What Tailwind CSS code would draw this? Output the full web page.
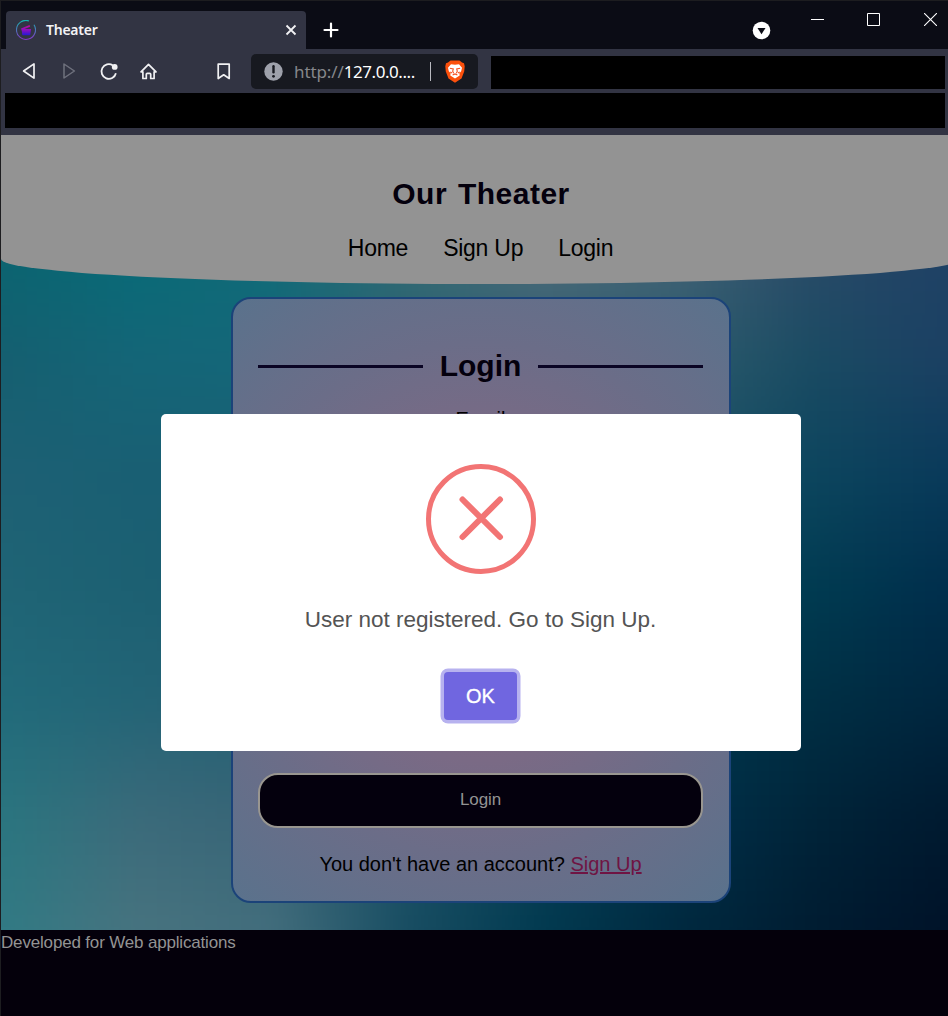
<!DOCTYPE html>
<html lang="en">
<head>
<meta charset="utf-8">
<title>Theater</title>
<script src="https://cdn.jsdelivr.net/npm/@tailwindcss/browser@4"></script>
</head>
<body class="w-[948px] h-[1016px] overflow-hidden bg-[#1d1d20] font-['Liberation_Sans',Arial,sans-serif]">
<div class="relative flex flex-col w-full h-full pl-px pt-px overflow-hidden">
  <!-- Tab strip -->
  <div class="flex h-12 shrink-0 bg-[#0b0c15] pl-[5px]">
    <div class="flex items-center mt-[10px] w-[300px] h-[38px] rounded-t-[4px] bg-[#323443] pl-[10px] pr-[9px]">
      <svg class="w-5 h-5" viewBox="0 0 20 20" fill="none">
        <defs>
          <linearGradient id="ring" x1="0" y1="0" x2="0" y2="1"><stop offset="0" stop-color="#16b5ae"/><stop offset="1" stop-color="#8536c8"/></linearGradient>
          <linearGradient id="clap" x1="0" y1="0" x2="0" y2="1"><stop offset="0" stop-color="#c4089a"/><stop offset=".5" stop-color="#8a0fc0"/><stop offset="1" stop-color="#2517d8"/></linearGradient>
        </defs>
        <path d="M13 .9A9.500 9.500 0 1 0 18 4.800" stroke="url(#ring)" stroke-width="1.100"/>
        <path d="M5 8.600 13.600 5l.5 1.700L8.500 9h6.500l-.7 5.500c0 .4-.3.700-.7.700H6.900c-.4 0-.7-.3-.7-.7L5.800 11z" fill="url(#clap)"/>
      </svg>
      <span class="ml-[10px] flex-1 font-['Noto_Sans',sans-serif] text-[14px] leading-5 font-semibold text-[#f2f2f5] tracking-[-0.25px]">Theater</span>
      <svg class="w-3 h-3" viewBox="0 0 12 12" stroke="#f2f2f4" stroke-width="1.800"><path d="M1.500 1.500l9 9M10.500 1.500l-9 9"/></svg>
    </div>
    <svg class="ml-[17px] mt-[21px] w-4 h-4" viewBox="0 0 16 16" stroke="#fff" stroke-width="2.200" stroke-linecap="round"><path d="M8 1.500v13M1.500 8h13"/></svg>
    <svg class="ml-[413px] mt-[20px] w-[18px] h-[18px] overflow-visible" viewBox="0 0 18 18"><circle cx="9.500" cy="9.500" r="8.800" fill="#fff"/><path d="M5.500 7h8l-4 6.200z" fill="#0b0c15"/></svg>
    <svg class="ml-[41px] mt-[12px] w-[13px] h-[13px]" viewBox="0 0 13 13"><path d="M0 6.500h13" stroke="#fff"/></svg>
    <svg class="ml-[43px] mt-[12px] w-[13px] h-[13px]" viewBox="0 0 13 13" fill="none"><path d="M.5.500h12v12H.5z" stroke="#fff"/></svg>
    <svg class="ml-[44px] mt-[12px] w-[13px] h-[13px]" viewBox="0 0 13 13" stroke="#fff" stroke-width="1.100"><path d="M0 0l13 13M13 0L0 13"/></svg>
  </div>
  <!-- Toolbar -->
  <div class="flex h-11 shrink-0 bg-[#323443] pl-[21px]">
    <svg class="mt-[13px] w-[14px] h-[18px]" viewBox="0 -.5 14 18" fill="none" stroke="#f1f1f3" stroke-width="1.700" stroke-linejoin="round"><path d="M12 1.400v14.200L1.600 8.500z"/></svg>
    <svg class="ml-[26px] mt-[13px] w-[14px] h-[18px]" viewBox="0 -.5 14 18" fill="none" stroke="#6f717d" stroke-width="1.500" stroke-linejoin="round"><path d="M2 1.500v14l10.400-7z"/></svg>
    <svg class="ml-[23px] mt-[13px] w-[18px] h-[18px] overflow-visible" viewBox="-.5 -.7 18 18" fill="none"><path d="M13.400 2.800A7.300 7.300 0 1 0 16.400 10.500" stroke="#f1f1f3" stroke-width="1.800"/><circle cx="15.200" cy="4.200" r="2.900" fill="#f1f1f3"/></svg>
    <svg class="ml-[22px] mt-[13px] w-[18px] h-[18px] overflow-visible" viewBox="-.5 -.8 18 18" fill="none" stroke="#f1f1f3" stroke-width="1.700" stroke-linejoin="round" stroke-linecap="round"><path d="M1.500 9 9 1.500 16.500 9H14.600V15.700H11.200V11.500a1 1 0 0 0-1-1H7.800a1 1 0 0 0-1 1v4.200H3.400V9z"/></svg>
    <svg class="ml-[60px] mt-[13px] w-[14px] h-[18px]" viewBox="0 -.7 14 18" fill="none" stroke="#f1f1f3" stroke-width="1.700" stroke-linejoin="round"><path d="M1.200 1.400h11v14.400L6.700 12.100l-5.500 3.700z"/></svg>
    <div class="ml-[20px] mt-[5px] flex items-center w-[227px] h-[35px] rounded-[5px] bg-[#171920] pl-[13px]">
      <svg class="w-[19px] h-[19px]" viewBox="0 0 19 19"><circle cx="9.500" cy="9.500" r="9.200" fill="#9ea1ab"/><path d="M9.500 4.300v6" stroke="#171920" stroke-width="2.400" stroke-linecap="round"/><circle cx="9.500" cy="14.300" r="1.400" fill="#171920"/></svg>
      <span class="ml-[11px] w-[122px] whitespace-nowrap font-['Noto_Sans',sans-serif] text-[17px] font-normal leading-6 text-[#85878b] tracking-[-0.1px]">http://<span class="text-white tracking-[-0.45px]">127.0.0....</span></span>
      <span class="ml-[14px] w-px h-[19px] bg-[#b9bac0]"></span>
      <svg class="ml-[14px] w-[20px] h-[23px]" viewBox="0 0 20 23"><path d="M5.500.500h9L17 2.500l2 .7.700 3-.5 5.300-2.700 7L10 22.700l-6.500-4.200-2.700-7L.3 6.200l.7-3L3 2.500z" fill="#fb500c"/><path d="M6 4.200 10 4.800l4-.6 3 3.600-.8 3.500-1.800 1.900.3 2.300L10 18.500l-4.700-3 .3-2.300-1.800-1.900L3 7.800z" fill="#fff"/><path d="M4.800 8.300l3.500.7-.6 2.200.9 2M15.200 8.300l-3.500.7.6 2.200-.9 2M7.600 15l2.400-1.100 2.400 1.100M5.300 12l1.600 1M14.700 12l-1.600 1" fill="none" stroke="#f6501e" stroke-width="1.100"/></svg>
    </div>
    <div class="ml-[13px] mt-[7px] w-[454px] h-[33px] bg-black"></div>
  </div>
  <div class="flex h-[42px] shrink-0 bg-[#323443] pl-1"><div class="w-[940px] h-[35px] bg-black"></div></div>

  <!-- Page -->
  <main class="relative isolate w-[960px] h-[795px] shrink-0 overflow-hidden flex flex-col items-center bg-[#1d5b70]">
    <svg class="absolute inset-0 -z-10 w-[960px] h-[795px]" viewBox="0 0 960 795">
      <defs><filter id="soft" x="0" y="0" width="100%" height="100%" color-interpolation-filters="sRGB"><feGaussianBlur stdDeviation="12"/></filter></defs>
      <g id="mesh" filter="url(#soft)"></g>
    </svg>
    <header class="flex flex-col items-center w-full h-[149px] bg-[#939393] rounded-b-[50%_25px] pt-[41px]">
      <h1 class="text-[30px] leading-9 font-bold text-[#04000d] tracking-[0.5px] [word-spacing:2px]">Our Theater</h1>
      <nav class="flex gap-[35px] mt-[22px] pr-px text-[23px] leading-[28px] text-black tracking-[-0.25px]"><a>Home</a><a>Sign Up</a><a>Login</a></nav>
    </header>
    <section class="mt-[13px] flex flex-col items-center w-[500px] h-[606px] rounded-[20px] border-2 border-[#1b4379] bg-[radial-gradient(circle_at_center,#936580_0%,#6b6d88_66%,#5a728c_100%)] pl-[25px] pr-[26px]">
      <div class="flex items-center justify-between w-[445px] mt-[47px]"><span class="w-[165px] h-[3px] bg-[#0a0424]"></span><h2 class="text-[30px] leading-[40px] font-bold text-[#04000d]">Login</h2><span class="w-[165px] h-[3px] bg-[#0a0424]"></span></div>
      <label class="mt-[21px] text-[20px] leading-6 text-black">Email</label>
      <button class="mt-[342px] w-[445px] h-[55px] shrink-0 rounded-[20px] border-2 border-[#999690] bg-[#04000d] text-[17px] leading-5 text-[#939393] tracking-[-0.1px] pb-[2px]">Login</button>
      <p class="mt-[24px] text-[20px] leading-6 text-black whitespace-nowrap">You don't have an account? <a class="text-[#6f1443] underline">Sign Up</a></p>
    </section>
  </main>
  <footer class="flex-1 bg-[#04000b] text-[#939393] text-[17px] leading-6 pt-px tracking-[-0.17px]">Developed for Web applications</footer>

  <!-- Alert -->
  <div class="absolute left-[161px] top-[414px] flex flex-col items-center w-[640px] h-[337px] rounded-[5px] bg-white">
    <svg class="mt-[50px] w-[110px] h-[110px]" viewBox="0 0 110 110" fill="none" stroke="#f27474" stroke-width="5"><circle cx="55" cy="55" r="52.500"/><path d="M36.500 35.500 74 73M74 35.500 36.500 73" stroke-width="6" stroke-linecap="round"/></svg>
    <p class="mt-[32px] pr-px text-[22.500px] leading-7 text-[#545454]">User not registered. Go to Sign Up.</p>
    <button class="mt-[38px] mr-px w-[73px] h-12 rounded-[4px] bg-[#7066e0] ring-[3.500px] ring-[#b7b2ef] text-white text-[20px] leading-6 [-webkit-text-stroke:0.35px_white]">OK</button>
  </div>
</div>
<script>
  // Colour mesh behind the page: swatches at evenly spaced points, interpolated into small cells.
  const points = [
    ['0a6470','076b77','116b77','2f6a74','4a6a79','426275','2a4a68','1f4165'],
    ['155f70','146577','146779','2f6170','355f70','2c5b6c','1a4b63','1b4063'],
    ['1d6074','195f73','195d72','1a566c','1c5568','1a5064','0c455e','093a5a'],
    ['1f6475','1c6072','1a5c70','14506a','0c475c','08445a','003b51','002e4c'],
    ['216a7a','236476','255f72','1a5266','06394f','00384e','002f44','00263f'],
    ['2a757f','3a6a7a','376476','1a5266','063f55','00304a','002439','001a30'],
    ['317a84','47737f','426d7c','184d62','023a50','00293f','001c31','001228']
  ];
  const rgb = hex => [0, 2, 4].map(i => parseInt(hex.slice(i, i + 2), 16));
  const mix = (a, b, t) => a.map((v, i) => v + (b[i] - v) * t);
  const ns = 'http://www.w3.org/2000/svg', mesh = document.getElementById('mesh');
  const left = 0, stepX = 135.3, top0 = 110, stepY = 114.2, size = 12;
  for (let y = -36; y < 831; y += size) for (let x = -36; x < 996; x += size) {
    const u = Math.min(6.999, Math.max(0, (x + size / 2 - left) / stepX));
    const v = Math.min(5.999, Math.max(0, (y + size / 2 - top0) / stepY));
    const c = Math.floor(u), r = Math.floor(v);
    const color = mix(mix(rgb(points[r][c]), rgb(points[r][c + 1]), u - c), mix(rgb(points[r + 1][c]), rgb(points[r + 1][c + 1]), u - c), v - r);
    const cell = document.createElementNS(ns, 'rect');
    cell.setAttribute('x', x); cell.setAttribute('y', y);
    cell.setAttribute('width', size + 0.5); cell.setAttribute('height', size + 0.5);
    cell.setAttribute('fill', `rgb(${color.map(Math.round).join(',')})`);
    mesh.appendChild(cell);
  }
</script>
</body>
</html>
